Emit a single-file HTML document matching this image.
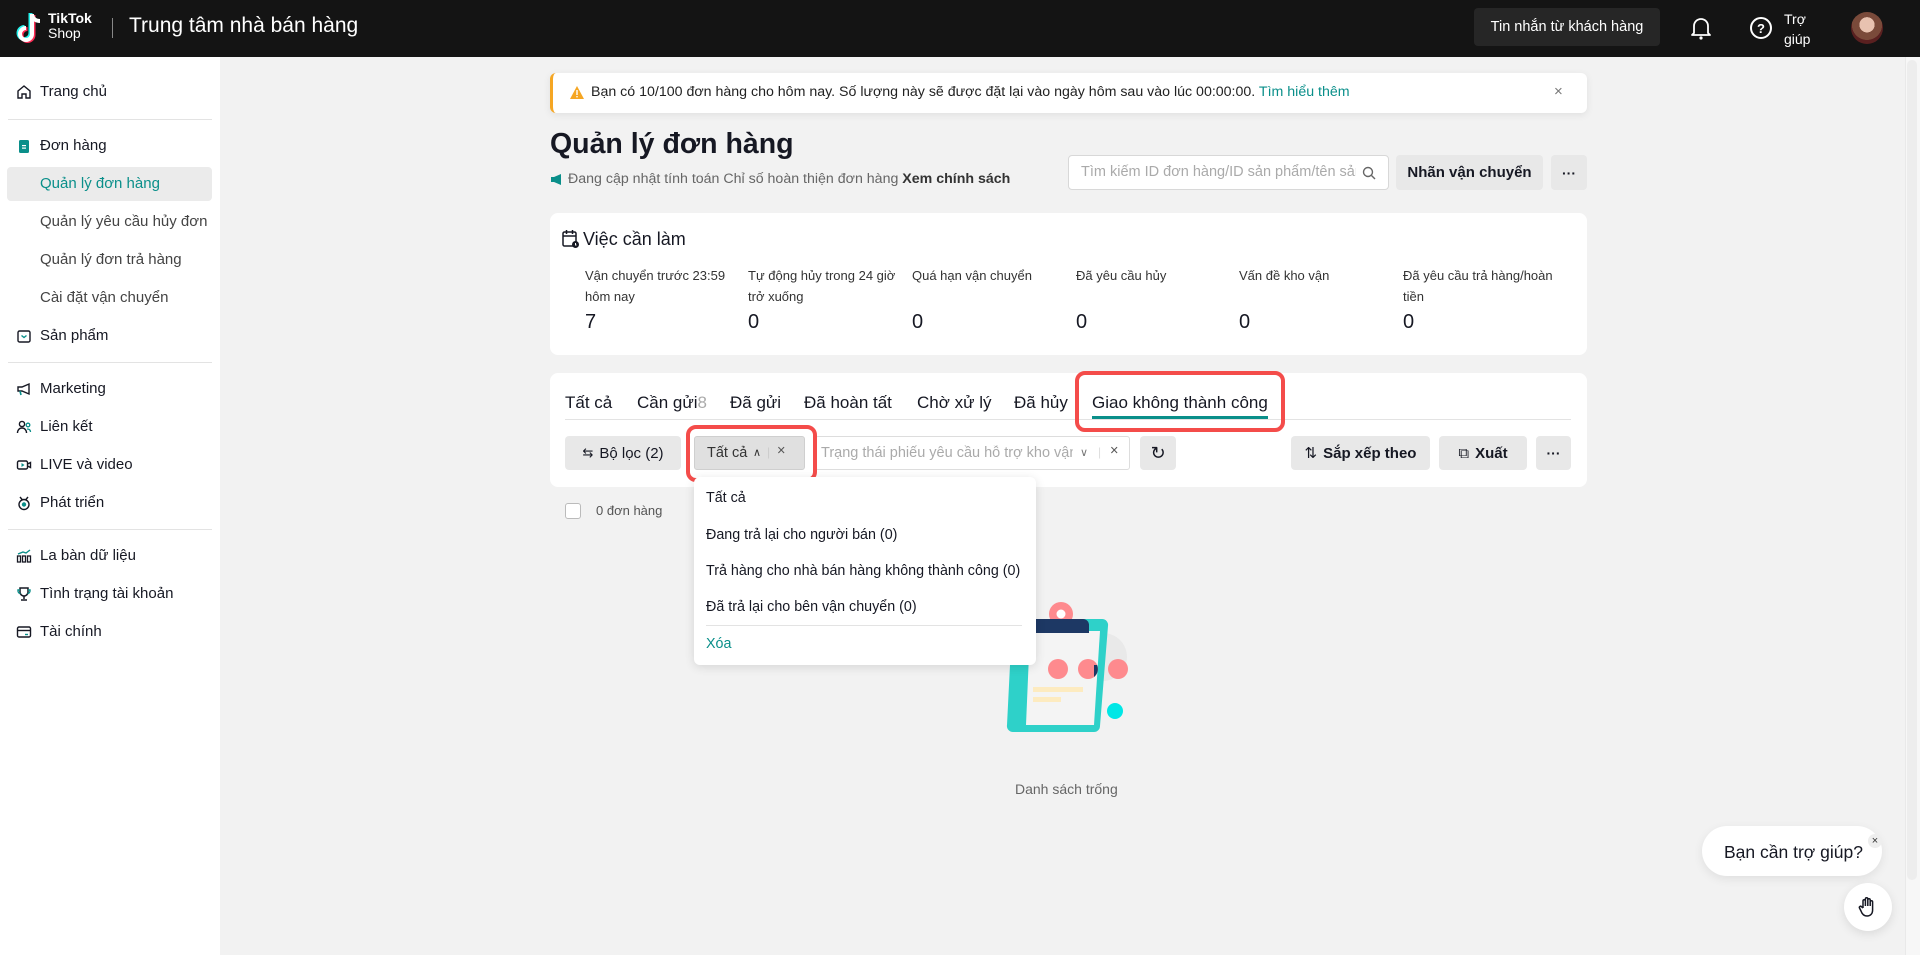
<!DOCTYPE html>
<html><head><meta charset="utf-8"><style>
*{box-sizing:border-box;margin:0;padding:0}
body{width:1920px;height:955px;overflow:hidden;background:#f2f2f2;font-family:"Liberation Sans","DejaVu Sans",sans-serif;color:#161823;position:relative}
.a{position:absolute}
.hdr{left:0;top:0;width:1920px;height:57px;background:#141414}
.side{left:0;top:57px;width:220px;height:898px;background:#fff}
.si{position:absolute;left:40px;font-size:15px;color:#161823;white-space:nowrap}
.ic{position:absolute;left:16px;width:16px;height:16px}
.div{position:absolute;left:8px;width:204px;height:1px;background:#e3e3e3}
.card{background:#fff;border-radius:8px}
.btn{background:#e8e8e8;border-radius:4px;font-size:15px;font-weight:bold;display:flex;align-items:center;justify-content:center;color:#161823}
.tl{font-size:13px;color:#333;line-height:21px}
.num{font-size:20px;color:#161823}
.tab{position:absolute;top:393px;font-size:17px;color:#161823;white-space:nowrap}
.dd{font-size:14.3px;position:absolute;left:706px;white-space:nowrap;color:#161823}
</style></head><body>
<div class="a hdr">
  <svg class="a" style="left:15px;top:12px" width="30" height="34" viewBox="0 0 30 34"><path d="M17 2v20a6 6 0 1 1-6-6" fill="none" stroke="#25f4ee" stroke-width="4" transform="translate(-1.5,-1)"/><path d="M17 2v20a6 6 0 1 1-6-6" fill="none" stroke="#fe2c55" stroke-width="4" transform="translate(1.5,1)"/><path d="M17 2v20a6 6 0 1 1-6-6M17 3c1 4 4 6 8 6" fill="none" stroke="#fff" stroke-width="4"/></svg>
  <div class="a" style="left:48px;top:11px;color:#fff;font-size:14px;font-weight:bold;line-height:14px">TikTok</div>
  <div class="a" style="left:48px;top:26px;color:#fff;font-size:14px;line-height:14px">Shop</div>
  <div class="a" style="left:112px;top:18px;width:1px;height:20px;background:#888"></div>
  <div class="a" style="left:129px;top:14px;color:#fff;font-size:21px">Trung tâm nhà bán hàng</div>
  <div class="a" style="left:1474px;top:8px;width:186px;height:38px;background:#262626;border-radius:4px;color:#fff;font-size:14.5px;display:flex;align-items:center;justify-content:center">Tin nhắn từ khách hàng</div>
  <svg class="a" style="left:1690px;top:16px" width="22" height="24" viewBox="0 0 22 24"><path d="M4 17V10a7 7 0 0 1 14 0v7l2 2H2z" fill="none" stroke="#fff" stroke-width="1.8" stroke-linejoin="round"/><circle cx="11" cy="22" r="1.6" fill="#fff"/></svg>
  <svg class="a" style="left:1749px;top:16px" width="24" height="24" viewBox="0 0 24 24"><circle cx="12" cy="12" r="10" fill="none" stroke="#fff" stroke-width="2"/><text x="12" y="17" text-anchor="middle" font-size="13" font-weight="bold" fill="#fff" font-family="Liberation Sans">?</text></svg>
  <div class="a" style="left:1784px;top:9px;color:#fff;font-size:14px;line-height:20px">Trợ<br>giúp</div>
  <div class="a" style="left:1851px;top:12px;width:32px;height:32px;border-radius:50%;background:radial-gradient(circle at 50% 40%,#e8c2b0 0 30%,#7a4a3a 31% 60%,#5a2020 61%)"></div>
</div>
<div class="a side">
  <svg class="ic" style="top:27px" viewBox="0 0 16 16"><path d="M2 7l6-5 6 5v7H10v-4H6v4H2z" fill="none" stroke="#161823" stroke-width="1.4"/></svg>
  <div class="si" style="top:26px">Trang chủ</div>
  <div class="div" style="top:62px"></div>
  <svg class="ic" style="top:81px" viewBox="0 0 16 16"><rect x="3" y="2" width="10" height="13" rx="1.5" fill="#0a8f8a"/><rect x="6" y="7" width="4" height="1.2" fill="#fff"/><rect x="6" y="9.5" width="4" height="1.2" fill="#fff"/></svg>
  <div class="si" style="top:80px">Đơn hàng</div>
  <div class="a" style="left:7px;top:110px;width:205px;height:34px;background:#ebebeb;border-radius:4px"></div>
  <div class="si" style="top:118px;color:#0a8f8a">Quản lý đơn hàng</div>
  <div class="si" style="top:156px;color:#444">Quản lý yêu cầu hủy đơn</div>
  <div class="si" style="top:194px;color:#444">Quản lý đơn trả hàng</div>
  <div class="si" style="top:232px;color:#444">Cài đặt vận chuyển</div>
  <svg class="ic" style="top:271px" viewBox="0 0 16 16"><rect x="2" y="3" width="12" height="11" rx="1.5" fill="none" stroke="#161823" stroke-width="1.4"/><path d="M5.5 7.5l2.5 2 2.5-2" fill="none" stroke="#0a8f8a" stroke-width="1.4"/></svg>
  <div class="si" style="top:270px">Sản phẩm</div>
  <div class="div" style="top:305px"></div>
  <svg class="ic" style="top:324px" viewBox="0 0 16 16"><path d="M2 6h4l7-3v10l-7-3H2z" fill="none" stroke="#161823" stroke-width="1.4"/><path d="M4 10l1 4" stroke="#0a8f8a" stroke-width="1.6"/></svg>
  <div class="si" style="top:323px">Marketing</div>
  <svg class="ic" style="top:362px" viewBox="0 0 16 16"><circle cx="6" cy="5" r="2.6" fill="none" stroke="#161823" stroke-width="1.4"/><path d="M1.5 14c0-3 2-5 4.5-5s4.5 2 4.5 5" fill="none" stroke="#161823" stroke-width="1.4"/><circle cx="12" cy="6" r="1.8" fill="none" stroke="#0a8f8a" stroke-width="1.3"/><path d="M11 10c2 0 3.5 1 3.5 3" fill="none" stroke="#0a8f8a" stroke-width="1.3"/></svg>
  <div class="si" style="top:361px">Liên kết</div>
  <svg class="ic" style="top:400px" viewBox="0 0 16 16"><rect x="1.5" y="4" width="10" height="8" rx="1.5" fill="none" stroke="#161823" stroke-width="1.4"/><path d="M11.5 7l3-1.5v5l-3-1.5" fill="none" stroke="#161823" stroke-width="1.4"/><path d="M5.5 6v4l3-2z" fill="#0a8f8a"/></svg>
  <div class="si" style="top:399px">LIVE và video</div>
  <svg class="ic" style="top:438px" viewBox="0 0 16 16"><circle cx="8" cy="9.5" r="5" fill="none" stroke="#161823" stroke-width="1.4"/><path d="M4 2l2.5 3M12 2l-2.5 3" stroke="#161823" stroke-width="1.4"/><circle cx="8" cy="9.5" r="2.2" fill="#0a8f8a"/></svg>
  <div class="si" style="top:437px">Phát triển</div>
  <div class="div" style="top:472px"></div>
  <svg class="ic" style="top:491px" viewBox="0 0 16 16"><rect x="1.5" y="8" width="3" height="6" fill="none" stroke="#161823" stroke-width="1.3"/><rect x="6.5" y="8" width="3" height="6" fill="none" stroke="#161823" stroke-width="1.3"/><rect x="11.5" y="8" width="3" height="6" fill="none" stroke="#161823" stroke-width="1.3"/><path d="M2 6l5-2 3 1 4-3" fill="none" stroke="#0a8f8a" stroke-width="1.4"/></svg>
  <div class="si" style="top:490px">La bàn dữ liệu</div>
  <svg class="ic" style="top:529px" viewBox="0 0 16 16"><path d="M4 2h8v4a4 4 0 0 1-8 0z" fill="none" stroke="#161823" stroke-width="1.5"/><path d="M4 4H2v1a2.5 2.5 0 0 0 2.5 2.5M12 4h2v1a2.5 2.5 0 0 1-2.5 2.5" fill="none" stroke="#0a8f8a" stroke-width="1.4"/><path d="M8 10v3M5 14h6" stroke="#161823" stroke-width="1.5"/></svg>
  <div class="si" style="top:528px">Tình trạng tài khoản</div>
  <svg class="ic" style="top:567px" viewBox="0 0 16 16"><rect x="1.5" y="3" width="13" height="10" rx="1.5" fill="none" stroke="#161823" stroke-width="1.4"/><path d="M1.5 6.5h13" stroke="#161823" stroke-width="1.4"/><path d="M9 10.5h3" stroke="#0a8f8a" stroke-width="1.4"/></svg>
  <div class="si" style="top:566px">Tài chính</div>
</div>
<div class="a" style="left:1905px;top:57px;width:15px;height:898px;background:#f7f7f7;border-left:1px solid #e9e9e9"></div>
<div class="a" style="left:1907px;top:60px;width:10px;height:820px;background:#ededed;border-radius:5px"></div>

<!-- banner -->
<div class="a card" style="left:550px;top:73px;width:1037px;height:40px;border-left:3px solid #f5a623;border-radius:6px;box-shadow:0 2px 8px rgba(0,0,0,.08)"></div>
<svg class="a" style="left:569px;top:85px" width="16" height="15" viewBox="0 0 16 15"><path d="M8 1l7 13H1z" fill="#f5a623"/><rect x="7.3" y="5" width="1.4" height="5" fill="#fff"/><rect x="7.3" y="11" width="1.4" height="1.4" fill="#fff"/></svg>
<div class="a" style="left:591px;top:84px;font-size:14.2px;color:#222;white-space:nowrap">Bạn có 10/100 đơn hàng cho hôm nay. Số lượng này sẽ được đặt lại vào ngày hôm sau vào lúc 00:00:00. <span style="color:#0a8f8a">Tìm hiểu thêm</span></div>
<div class="a" style="left:1554px;top:83px;font-size:15px;color:#777">×</div>

<div class="a" style="left:550px;top:128px;font-size:28.5px;font-weight:bold">Quản lý đơn hàng</div>
<svg class="a" style="left:550px;top:173px" width="14" height="13" viewBox="0 0 14 13"><path d="M1 4h3l7-3v11L4 9H1z" fill="#0a8f8a"/></svg>
<div class="a" style="left:568px;top:171px;font-size:14.2px;color:#666;white-space:nowrap">Đang cập nhật tính toán Chỉ số hoàn thiện đơn hàng <b style="color:#333">Xem chính sách</b></div>
<div class="a" style="left:1068px;top:155px;width:321px;height:35px;background:#fff;border:1px solid #d8d8d8;border-radius:4px;overflow:hidden">
  <div class="a" style="left:12px;top:8px;font-size:14.5px;color:#aaa;white-space:nowrap;width:275px;overflow:hidden">Tìm kiếm ID đơn hàng/ID sản phẩm/tên sản phẩm</div>
  <svg class="a" style="left:293px;top:10px" width="14" height="14" viewBox="0 0 14 14"><circle cx="6" cy="6" r="4.5" fill="none" stroke="#666" stroke-width="1.4"/><path d="M9.5 9.5L13 13" stroke="#666" stroke-width="1.4"/></svg>
</div>
<div class="a btn" style="left:1396px;top:155px;width:147px;height:35px">Nhãn vận chuyển</div>
<div class="a btn" style="left:1551px;top:155px;width:36px;height:35px;font-size:14px">···</div>

<!-- todo -->
<div class="a card" style="left:550px;top:213px;width:1037px;height:142px"></div>
<svg class="a" style="left:562px;top:229px" width="18" height="20" viewBox="0 0 18 20"><rect x="1" y="3" width="13" height="14" rx="1.5" fill="none" stroke="#161823" stroke-width="1.5"/><path d="M1 7h13M4.5 1v4M10.5 1v4" stroke="#161823" stroke-width="1.5"/><circle cx="13.5" cy="15.5" r="3.5" fill="#161823"/><path d="M13.5 14v2h1" stroke="#fff" stroke-width="1"/></svg>
<div class="a" style="left:583px;top:229px;font-size:18px">Việc cần làm</div>
<div class="a tl" style="left:585px;top:265px">Vận chuyển trước 23:59<br>hôm nay</div>
<div class="a tl" style="left:748px;top:265px">Tự động hủy trong 24 giờ<br>trở xuống</div>
<div class="a tl" style="left:912px;top:265px">Quá hạn vận chuyển</div>
<div class="a tl" style="left:1076px;top:265px">Đã yêu cầu hủy</div>
<div class="a tl" style="left:1239px;top:265px">Vấn đề kho vận</div>
<div class="a tl" style="left:1403px;top:265px">Đã yêu cầu trả hàng/hoàn<br>tiền</div>
<div class="a num" style="left:585px;top:311px">7</div>
<div class="a num" style="left:748px;top:311px">0</div>
<div class="a num" style="left:912px;top:311px">0</div>
<div class="a num" style="left:1076px;top:311px">0</div>
<div class="a num" style="left:1239px;top:311px">0</div>
<div class="a num" style="left:1403px;top:311px">0</div>

<!-- tabs card -->
<div class="a card" style="left:550px;top:373px;width:1037px;height:114px"></div>
<div class="tab" style="left:565px">Tất cả</div>
<div class="tab" style="left:637px">Cần gửi<span style="color:#aaa">8</span></div>
<div class="tab" style="left:730px">Đã gửi</div>
<div class="tab" style="left:804px">Đã hoàn tất</div>
<div class="tab" style="left:917px">Chờ xử lý</div>
<div class="tab" style="left:1014px">Đã hủy</div>
<div class="tab" style="left:1092px">Giao không thành công</div>
<div class="a" style="left:565px;top:419px;width:1006px;height:1px;background:#e3e3e3"></div>
<div class="a" style="left:1092px;top:416px;width:176px;height:3px;background:#0a8f8a"></div>
<div class="a" style="left:1075px;top:371px;width:210px;height:61px;border:4px solid #f44c4a;border-radius:10px"></div>

<div class="a btn" style="left:565px;top:436px;width:116px;height:34px;font-weight:normal"><span style="font-size:13px;margin-right:6px">⇆</span>Bộ lọc&nbsp;(2)</div>
<div class="a" style="left:694px;top:436px;width:111px;height:34px;background:#e0e0e0;border:1px solid #cfcfcf;border-radius:3px;font-size:14.5px;color:#333">
  <span class="a" style="left:12px;top:8px">Tất cả</span><span class="a" style="left:58px;top:9px;font-size:11px">∧</span><span class="a" style="left:72px;top:8px;color:#ccc;font-size:12px">|</span><span class="a" style="left:82px;top:6px;color:#555">×</span>
</div>
<div class="a" style="left:815px;top:436px;width:315px;height:34px;background:#fff;border:1px solid #ddd;border-radius:3px;font-size:14.5px;color:#aaa;overflow:hidden">
  <span class="a" style="left:5px;top:8px;white-space:nowrap;width:252px;overflow:hidden">Trạng thái phiếu yêu cầu hỗ trợ kho vận</span><span class="a" style="left:264px;top:9px;color:#777;font-size:11px">∨</span><span class="a" style="left:282px;top:8px;color:#ddd;font-size:12px">|</span><span class="a" style="left:294px;top:6px;color:#555">×</span>
</div>
<div class="a btn" style="left:1140px;top:436px;width:36px;height:34px;font-weight:normal;font-size:18px">↻</div>
<div class="a" style="left:686px;top:425px;width:131px;height:57px;border:4px solid #f44c4a;border-radius:10px"></div>
<div class="a btn" style="left:1291px;top:436px;width:139px;height:34px"><span style="font-weight:normal;margin-right:6px">⇅</span>Sắp xếp theo</div>
<div class="a btn" style="left:1439px;top:436px;width:88px;height:34px"><span style="font-weight:normal;margin-right:6px">⧉</span>Xuất</div>
<div class="a btn" style="left:1536px;top:436px;width:35px;height:34px;font-size:14px">···</div>

<div class="a" style="left:565px;top:503px;width:16px;height:16px;border:1px solid #bbb;border-radius:3px;background:#fff"></div>
<div class="a" style="left:596px;top:503px;font-size:13px;color:#555">0 đơn hàng</div>

<!-- illustration -->
<svg class="a" style="left:990px;top:595px" width="150" height="150" viewBox="990 595 150 150">
  <circle cx="1103" cy="657" r="24" fill="#e9e9e9"/>
  <circle cx="1061" cy="614" r="12" fill="#fe8a8e"/><circle cx="1061" cy="614" r="4.5" fill="#fff"/>
  <path d="M1018 619h84a6 6 0 0 1 6 7l-8 100a6 6 0 0 1-6 6h-81a6 6 0 0 1-6-7l5-100a6 6 0 0 1 6-6z" fill="#2ed1c9"/>
  <path d="M1030 631h70l-6 94h-68z" fill="#f4f4f4"/>
  <path d="M1036 619h47a6 6 0 0 1 6 6v8h-53z" fill="#1d3864"/>
  <circle cx="1058" cy="669" r="10" fill="#fe8a8e"/><circle cx="1088" cy="669" r="10" fill="#fe8a8e"/><circle cx="1118" cy="669" r="10" fill="#fe8a8e"/>
  <path d="M1094 665v12a10 10 0 0 0 3-12z" fill="#1d3864"/>
  <rect x="1033" y="687" width="50" height="5" fill="#fdebc0"/><rect x="1033" y="697" width="28" height="5" fill="#fdebc0"/>
  <circle cx="1115" cy="711" r="8" fill="#00e7e6"/>
</svg>
<div class="a" style="left:1015px;top:781px;font-size:14px;color:#666">Danh sách trống</div>

<!-- dropdown -->
<div class="a" style="left:694px;top:477px;width:342px;height:188px;background:#fff;border-radius:6px;box-shadow:0 2px 10px rgba(0,0,0,.12)"></div>
<div class="dd" style="top:490px">Tất cả</div>
<div class="dd" style="top:527px">Đang trả lại cho người bán (0)</div>
<div class="dd" style="top:563px">Trả hàng cho nhà bán hàng không thành công (0)</div>
<div class="dd" style="top:599px">Đã trả lại cho bên vận chuyển (0)</div>
<div class="a" style="left:706px;top:625px;width:316px;height:1px;background:#e3e3e3"></div>
<div class="dd" style="top:636px;color:#0a8f8a">Xóa</div>

<!-- help -->
<div class="a" style="left:1702px;top:826px;width:180px;height:50px;background:#fff;border-radius:25px;box-shadow:0 3px 10px rgba(0,0,0,.08)"></div>
<div class="a" style="left:1724px;top:842px;font-size:17.5px;color:#161823">Bạn cần trợ giúp?</div>
<div class="a" style="left:1868px;top:834px;width:14px;height:14px;border-radius:50%;background:#eee;font-size:11px;text-align:center;line-height:14px;color:#333">×</div>
<div class="a" style="left:1844px;top:883px;width:48px;height:48px;border-radius:50%;background:#fff;box-shadow:0 3px 10px rgba(0,0,0,.1)"></div>
<svg class="a" style="left:1856px;top:895px" width="24" height="24" viewBox="0 0 24 24"><path d="M7 13V6a1.2 1.2 0 0 1 2.4 0v5M9.4 11V4a1.2 1.2 0 0 1 2.4 0v7M11.8 11V5a1.2 1.2 0 0 1 2.4 0v6M14.2 11V7a1.2 1.2 0 0 1 2.4 0v8c0 4-2.5 6-5.5 6S6 19 5 16l-1.5-3a1.2 1.2 0 0 1 2-1.3L7 13" fill="none" stroke="#161823" stroke-width="1.5" stroke-linejoin="round"/></svg>
</body></html>
